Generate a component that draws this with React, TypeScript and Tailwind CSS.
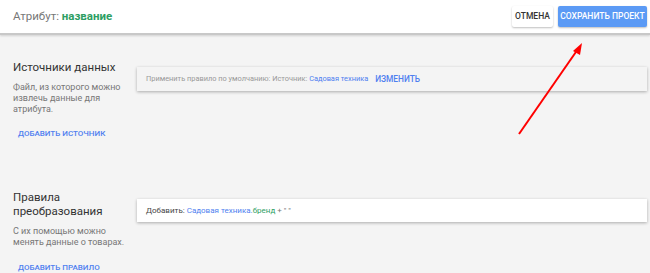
export default function App() {
  return (
    <div className="relative w-[650px] h-[273px] overflow-hidden bg-[#f4f4f4] font-['Roboto',sans-serif]">
      <header className="h-[35px] bg-white border-b-2 border-[#c8c8c8] shadow-[0_1px_2px_rgba(0,0,0,0.15)] flex items-center justify-between pl-[13px] pr-[3px]">
        <div className="text-[11.5px] text-[#777]">
          Атрибут: <span className="font-bold text-[#2e9e63]">название</span>
        </div>
        <div className="flex items-center gap-[5px]">
          <button className="h-[21px] w-[41px] bg-white text-[8.5px] font-medium text-[#333] rounded-[2px] shadow-[0_1px_2px_rgba(0,0,0,0.25)] whitespace-nowrap">
            ОТМЕНА
          </button>
          <button className="h-[21px] w-[89px] bg-[#5b9af5] text-[8.5px] font-medium text-white rounded-[2px] shadow-[0_1px_2px_rgba(0,0,0,0.25)] whitespace-nowrap">
            СОХРАНИТЬ ПРОЕКТ
          </button>
        </div>
      </header>

      <section className="flex pt-[25px]">
        <div className="w-[137px] pl-[13px] pr-[14px] shrink-0">
          <h2 className="text-[11.5px] leading-[14px] text-[#333]">Источники данных</h2>
          <p className="mt-[8px] text-[9px] leading-[11px] text-[#777]">
            Файл, из которого можно извлечь данные для атрибута.
          </p>
          <div className="mt-[14px] pl-[5px] text-[8px] leading-[10px] font-medium text-[#4f7ff0] whitespace-nowrap">
            ДОБАВИТЬ ИСТОЧНИК
          </div>
        </div>
        <div className="flex-1 pr-[3px] pt-[7px]">
          <div className="h-[24px] flex items-center pl-[9px] bg-[#f4f4f4] shadow-[0_1px_3px_rgba(0,0,0,0.3)] text-[7.4px] text-[#999] whitespace-nowrap">
            Применить правило по умолчанию: Источник:&nbsp;<span className="text-[#4f7ff0]">Садовая техника</span>
            <span className="ml-[7px] text-[8.3px] font-medium text-[#4f7ff0]">ИЗМЕНИТЬ</span>
          </div>
        </div>
      </section>

      <section className="flex pt-[51px]">
        <div className="w-[137px] pl-[13px] pr-[14px] shrink-0">
          <h2 className="text-[11.5px] leading-[14px] text-[#333]">Правила преобразования</h2>
          <p className="mt-[8px] text-[9px] leading-[11px] text-[#777] whitespace-nowrap">
            С их помощью можно
            <br />
            менять данные о товарах.
          </p>
          <div className="mt-[15px] pl-[5px] text-[8px] leading-[10px] font-medium text-[#4f7ff0] whitespace-nowrap">
            ДОБАВИТЬ ПРАВИЛО
          </div>
        </div>
        <div className="flex-1 pr-[3px] pt-[9px]">
          <div className="h-[23px] flex items-center pl-[9px] bg-white shadow-[0_1px_3px_rgba(0,0,0,0.3)] text-[8px] text-[#444] whitespace-nowrap">
            Добавить:&nbsp;<span className="text-[#4f7ff0]">Садовая техника.</span>
            <span className="text-[#2e9e63]">бренд</span>
            <span className="text-[#777]">&nbsp;+ " "</span>
          </div>
        </div>
      </section>

      <svg className="absolute left-0 top-0 pointer-events-none" width="650" height="273">
        <line x1="519" y1="134" x2="578" y2="49" stroke="#f00" strokeWidth="2" />
        <polygon points="582,43 573,51 580,55" fill="#f00" />
      </svg>
    </div>
  );
}
